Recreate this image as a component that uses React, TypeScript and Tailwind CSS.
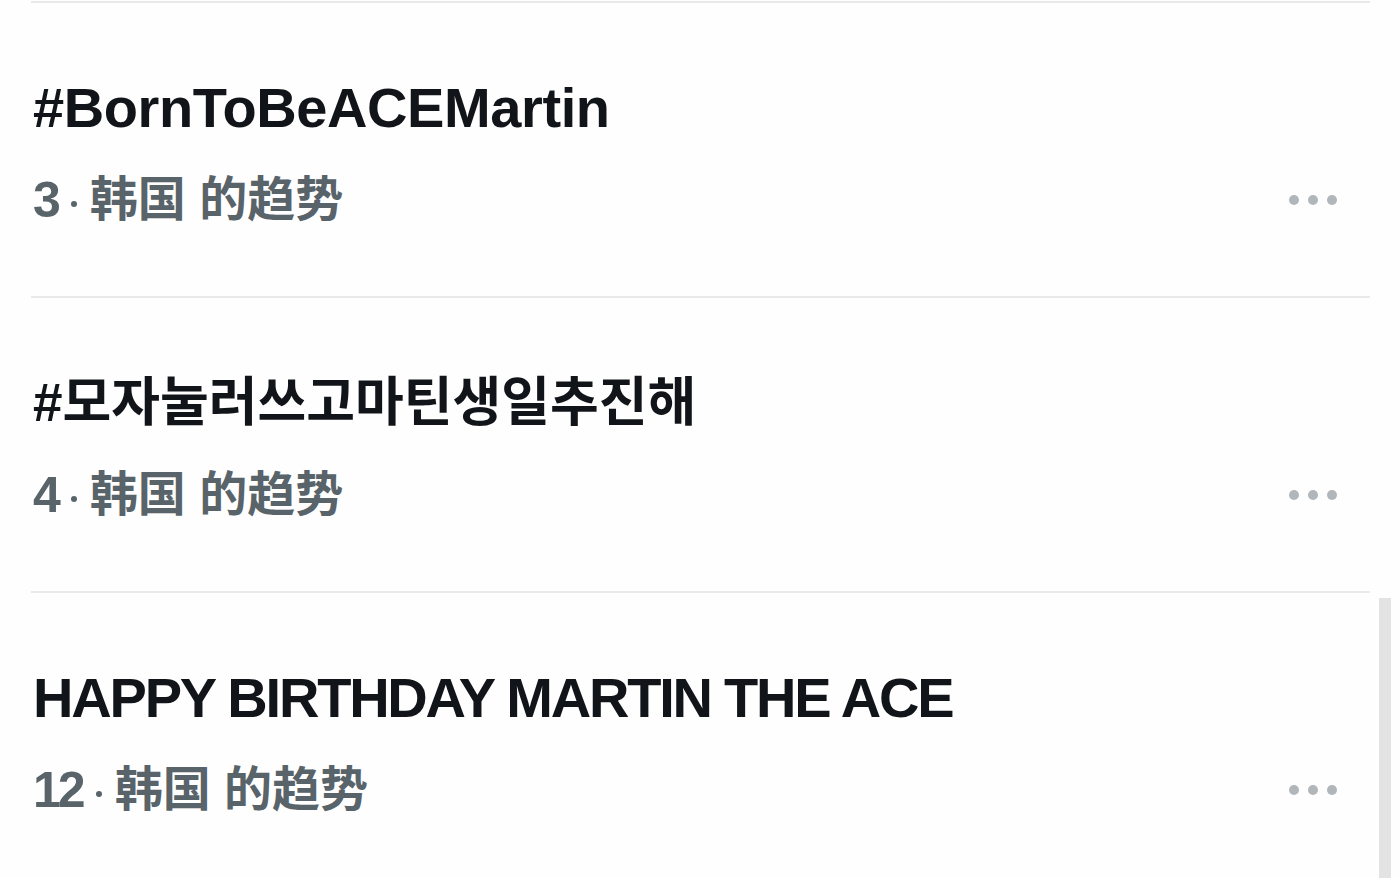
import React from 'react';

type Trend = {
  title: string;
  rank: number;
  titleClass: string;
};

const trends: Trend[] = [
  { title: '#BornToBeACEMartin', rank: 3, titleClass: 'text-[56px] tracking-[-0.4px]' },
  { title: '#모자눌러쓰고마틴생일추진해', rank: 4, titleClass: 'text-[53px] tracking-[0px]' },
  { title: 'HAPPY BIRTHDAY MARTIN THE ACE', rank: 12, titleClass: 'text-[56px] tracking-[-2.2px]' },
];

function MoreDots() {
  return (
    <div className="flex items-center gap-[9px] pr-[1px]">
      <span className="block w-[10px] h-[10px] rounded-full bg-[#b1b6ba]" />
      <span className="block w-[10px] h-[10px] rounded-full bg-[#b1b6ba]" />
      <span className="block w-[10px] h-[10px] rounded-full bg-[#b1b6ba]" />
    </div>
  );
}

function TrendRow({ trend }: { trend: Trend }) {
  return (
    <div className="h-[293px] pt-[73px] pl-[33px] pr-[62px]">
      <div
        className={`h-[64px] leading-[64px] font-bold text-[#111418] whitespace-nowrap ${trend.titleClass}`}
        style={{ fontFamily: '"Liberation Sans", "Noto Sans CJK KR", sans-serif' }}
      >
        {trend.title}
      </div>
      <div className="mt-[30px] h-[60px] flex items-center justify-between">
        <div
          className="flex items-center text-[#59636a] whitespace-nowrap"
          style={{ fontFamily: '"Liberation Sans", "Noto Sans CJK SC", sans-serif' }}
        >
          <span className="text-[50px] leading-[60px] font-bold tracking-[-3px]">{trend.rank}</span>
          <span className="block w-[6px] h-[6px] rounded-full bg-[#59636a] ml-[13px] mr-[13px] mt-[7px]" />
          <span className="text-[48px] leading-[60px] font-semibold">韩国 的趋势</span>
        </div>
        <MoreDots />
      </div>
    </div>
  );
}

export default function App() {
  return (
    <div className="relative w-[1400px] h-[878px] overflow-hidden bg-[#fefefe]">
      <div className="pt-[1px]">
        {trends.map((t) => (
          <div key={t.rank}>
            <div className="ml-[31px] w-[1339px] h-[2px] bg-[#e7e9eb]" />
            <TrendRow trend={t} />
          </div>
        ))}
      </div>

      {/* scrollbar */}
      <div className="absolute left-[1379px] top-[598px] w-[12px] h-[280px] bg-[#e3e3e3]" />
    </div>
  );
}
